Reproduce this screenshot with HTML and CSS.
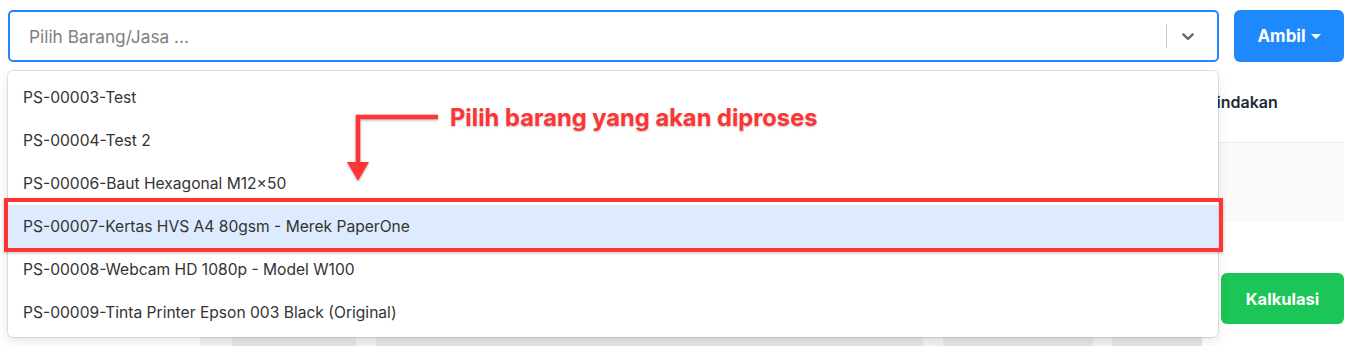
FILE: index.html
```html
<!DOCTYPE html>
<html lang="id">
<head>
<meta charset="utf-8">
<title>Pilih Barang</title>
<link rel="stylesheet" href="styles.css">
</head>
<body>
<div class="page">
  <div class="toolbar">
    <div class="select">
      <div class="select-value">Pilih Barang/Jasa ...</div>
      <div class="select-indicators">
        <span class="sep"></span>
        <span class="chev">
          <svg width="20" height="20" viewBox="0 0 20 20"><path d="M4.516 7.548c0.436-0.446 1.043-0.481 1.576 0l3.908 3.747 3.908-3.747c0.533-0.481 1.141-0.446 1.574 0 0.436 0.445 0.408 1.197 0 1.615-0.406 0.418-4.695 4.502-4.695 4.502-0.217 0.223-0.502 0.335-0.787 0.335s-0.57-0.112-0.789-0.335c0 0-4.287-4.084-4.695-4.502s-0.436-1.170 0-1.615z" fill="#666"/></svg>
        </span>
      </div>
    </div>
    <button class="btn btn-blue">Ambil <span class="caret"></span></button>
  </div>

  <div class="table">
    <div class="thead">
      <div class="th-fill"></div>
      <div class="th">Tindakan</div>
    </div>
    <div class="tbody-row"></div>
  </div>

  <div class="actions">
    <button class="btn btn-green">Kalkulasi</button>
  </div>

  <div class="skeleton">
    <span class="sk sk-a"></span>
    <span class="sk sk-b"></span>
    <span class="sk sk-c"></span>
    <span class="sk sk-d"></span>
  </div>
</div>

<div class="menu">
  <div class="option">PS-00003-Test</div>
  <div class="option">PS-00004-Test 2</div>
  <div class="option">PS-00006-Baut Hexagonal M12×50</div>
  <div class="option option-active">PS-00007-Kertas HVS A4 80gsm - Merek PaperOne</div>
  <div class="option">PS-00008-Webcam HD 1080p - Model W100</div>
  <div class="option">PS-00009-Tinta Printer Epson 003 Black (Original)</div>
</div>

<div class="highlight-box"></div>
<div class="callout">
  <svg class="callout-arrow" width="100" height="80" viewBox="0 0 100 80">
    <path d="M92 9 H12 V56" fill="none" stroke="#ff3535" stroke-width="4.5"/>
    <path d="M1 54 H23 L12 73 Z" fill="#ff3535"/>
  </svg>
  <span class="callout-text">Pilih barang yang akan diproses</span>
</div>
</body>
</html>
```

FILE: styles.css
```css
* { box-sizing: border-box; }
html, body {
  margin: 0;
  padding: 0;
  background: #ffffff;
  font-family: Inter, "Noto Sans", "Liberation Sans", sans-serif;
  overflow: hidden;
}
.page {
  width: 1360px;
  height: 346px;
  padding: 10px 16px 0 8px;
}
.toolbar {
  display: flex;
  gap: 15px;
  height: 52px;
}
.select {
  width: 1211px;
  height: 52px;
  border: 2px solid #2684ff;
  border-radius: 5px;
  display: flex;
  align-items: center;
  background: #fff;
}
.select-value {
  flex: 1;
  padding-left: 19px;
  font-size: 17.3px;
  color: #808080;
}
.select-indicators {
  display: flex;
  align-items: center;
  height: 100%;
}
.sep {
  width: 1px;
  height: 24px;
  background: #cccccc;
}
.chev {
  display: flex;
  align-items: center;
  justify-content: center;
  width: 42px;
  height: 100%;
  margin-right: 8px;
}
.btn {
  border: none;
  font-family: inherit;
  font-weight: 700;
  font-size: 17px;
  color: #fff;
  cursor: pointer;
}
.btn-blue {
  width: 110px;
  height: 52px;
  background: #1e88fd;
  border-radius: 6px;
  display: flex;
  align-items: center;
  justify-content: center;
  gap: 5px;
}
.caret {
  width: 0;
  height: 0;
  border-left: 5px solid transparent;
  border-right: 5px solid transparent;
  border-top: 5px solid #fff;
  margin-top: 1px;
}
.table {
  margin-top: 18px;
}
.thead {
  display: flex;
  height: 62px;
}
.th-fill { flex: 1; }
.th {
  width: 138px;
  display: flex;
  align-items: center;
  padding-bottom: 19px;
  font-size: 16px;
  font-weight: 600;
  color: #1f2937;
}
.tbody-row {
  height: 80px;
  background: #fafafa;
  border-top: 1px solid #eeeeee;
}
.actions {
  display: flex;
  justify-content: flex-end;
  margin-top: 51px;
}
.btn-green {
  width: 123px;
  height: 51px;
  background: #1cc557;
  border-radius: 6px;
  font-size: 16.5px;
}
.skeleton {
  margin-top: 13px;
  margin-left: 192px;
  width: 1002px;
  height: 9px;
  background: #f3f3f4;
  display: flex;
}
.sk {
  display: block;
  height: 100%;
  background: #e6e6e8;
}
.sk-a { margin-left: 32px; width: 124px; }
.sk-b { margin-left: 20px; width: 547px; }
.sk-c { margin-left: 20px; width: 150px; }
.sk-d { margin-left: 19px; width: 90px; }

/* dropdown menu overlay */
.menu {
  position: absolute;
  left: 8px;
  top: 71px;
  width: 1210px;
  padding: 5px 0 3px;
  background: #fff;
  border-radius: 5px;
  box-shadow: 0 0 0 1px rgba(0,0,0,0.1), 0 4px 11px rgba(0,0,0,0.1);
  z-index: 5;
}
.option {
  height: 43px;
  display: flex;
  align-items: center;
  padding-left: 15px;
  font-size: 15.6px;
  color: #333333;
}
.option-active {
  background: #deebff;
}

/* annotation overlays */
.highlight-box {
  position: absolute;
  left: 4px;
  top: 198px;
  width: 1219px;
  height: 54px;
  border: 4px solid #ff3535;
  box-shadow: 0 1px 3px rgba(0,0,0,0.25);
  z-index: 6;
}
.callout {
  position: absolute;
  left: 346px;
  top: 108px;
  display: flex;
  align-items: flex-start;
  z-index: 7;
}
.callout-arrow {
  display: block;
  filter: drop-shadow(0 1px 1.5px rgba(0,0,0,0.3));
}
.callout-text {
  margin-left: 4px;
  margin-top: -5px;
  font-size: 23.7px;
  font-weight: 700;
  color: #ff3535;
  text-shadow: 0 1px 2px rgba(0,0,0,0.25);
  white-space: nowrap;
}
```
